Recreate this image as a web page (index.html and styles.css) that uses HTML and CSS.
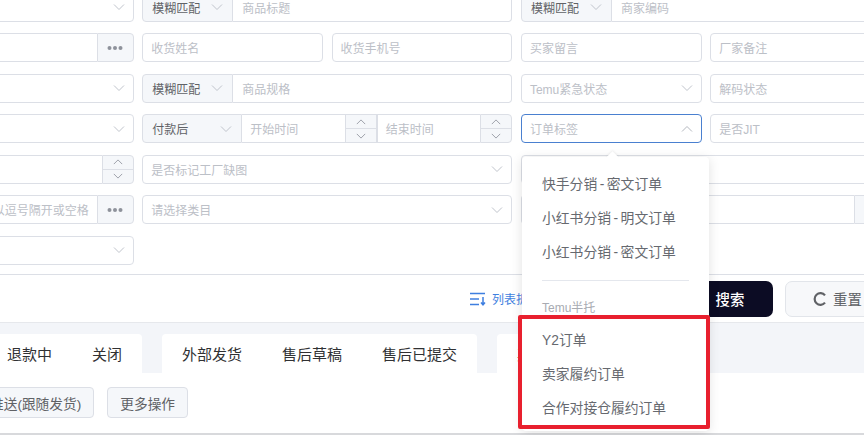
FILE: index.html
```html
<!DOCTYPE html>
<html>
<head>
    <title>订单列表</title>
    <link rel="stylesheet" href="styles.css">
</head>
<body>
    <svg class="icon-defs" width="0" height="0">
        <symbol id="down" viewBox="0 0 12 12"><path d="M1 3.5 L6 8.5 L11 3.5" fill="none" stroke="currentColor" stroke-width="1"/></symbol>
        <symbol id="up" viewBox="0 0 12 12"><path d="M1 8.5 L6 3.5 L11 8.5" fill="none" stroke="currentColor" stroke-width="1"/></symbol>
        <symbol id="dots" viewBox="0 0 16 6"><circle cx="2.5" cy="3" r="2"/><circle cx="8" cy="3" r="2"/><circle cx="13.5" cy="3" r="2"/></symbol>
    </svg>

    <div class="filters">
        <div class="filter-grid">
            <div class="field"><span class="grow"></span><svg class="arrow"><use href="#down"/></svg></div>
            <div class="group wide">
                <div class="prepend"><span>模糊匹配</span><svg class="arrow"><use href="#down"/></svg></div>
                <div class="field"><span class="ph">商品标题</span></div>
            </div>
            <div class="group wide">
                <div class="prepend"><span>模糊匹配</span><svg class="arrow"><use href="#down"/></svg></div>
                <div class="field"><span class="ph">商家编码</span></div>
            </div>

            <div class="group">
                <div class="field"></div>
                <div class="append"><svg class="dots"><use href="#dots"/></svg></div>
            </div>
            <div class="field"><span class="ph">收货姓名</span></div>
            <div class="field"><span class="ph">收货手机号</span></div>
            <div class="field"><span class="ph">买家留言</span></div>
            <div class="field"><span class="ph">厂家备注</span></div>

            <div class="field"><span class="grow"></span><svg class="arrow"><use href="#down"/></svg></div>
            <div class="group wide">
                <div class="prepend"><span>模糊匹配</span><svg class="arrow"><use href="#down"/></svg></div>
                <div class="field"><span class="ph">商品规格</span></div>
            </div>
            <div class="field"><span class="ph grow">Temu紧急状态</span><svg class="arrow"><use href="#down"/></svg></div>
            <div class="field"><span class="ph">解码状态</span></div>

            <div class="field"><span class="grow"></span><svg class="arrow"><use href="#down"/></svg></div>
            <div class="group wide">
                <div class="prepend pay"><span>付款后</span><svg class="arrow"><use href="#down"/></svg></div>
                <div class="field time"><span class="ph grow">开始时间</span></div>
                <div class="spinner">
                    <div><svg class="arrow"><use href="#up"/></svg></div>
                    <div><svg class="arrow"><use href="#down"/></svg></div>
                </div>
                <div class="field time"><span class="ph grow">结束时间</span></div>
                <div class="spinner">
                    <div><svg class="arrow"><use href="#up"/></svg></div>
                    <div><svg class="arrow"><use href="#down"/></svg></div>
                </div>
            </div>
            <div class="field focused"><span class="ph grow">订单标签</span><svg class="arrow big"><use href="#up"/></svg></div>
            <div class="field"><span class="ph">是否JIT</span></div>

            <div class="group">
                <div class="field"></div>
                <div class="spinner">
                    <div><svg class="arrow"><use href="#up"/></svg></div>
                    <div><svg class="arrow"><use href="#down"/></svg></div>
                </div>
            </div>
            <div class="field wide"><span class="ph grow">是否标记工厂缺图</span><svg class="arrow"><use href="#down"/></svg></div>
            <div class="field wide"></div>

            <div class="group">
                <div class="field end"><span class="ph">多个以逗号隔开或空格</span></div>
                <div class="append"><svg class="dots"><use href="#dots"/></svg></div>
            </div>
            <div class="field wide"><span class="ph grow">请选择类目</span><svg class="arrow"><use href="#down"/></svg></div>
            <div class="group wide">
                <div class="field"></div>
                <div class="append"><svg class="dots"><use href="#dots"/></svg></div>
            </div>

            <div class="field"><span class="grow"></span><svg class="arrow"><use href="#down"/></svg></div>
        </div>

        <div class="actions">
            <a class="collapse-link">
                <svg class="collapse-icon" viewBox="0 0 16 14"><path d="M0 1.5H15M0 7H9M0 12.5H9M13 5V12.5M11 10.5L13 12.8L15 10.5" fill="none" stroke="currentColor" stroke-width="1.5"/></svg>
                <span>列表折叠</span>
            </a>
            <button class="btn-search">搜索</button>
            <button class="btn-reset">
                <svg class="reset-icon" viewBox="0 0 14 14"><path d="M12 3.4A5.8 5.8 0 1 0 12 10.6" fill="none" stroke="currentColor" stroke-width="2.2"/></svg>
                <span>重置</span>
            </button>
        </div>
    </div>

    <div class="tabs-band">
        <div class="tab-card first">
            <div class="tab">退款中</div>
            <div class="tab">关闭</div>
        </div>
        <div class="tab-card">
            <div class="tab">外部发货</div>
            <div class="tab">售后草稿</div>
            <div class="tab">售后已提交</div>
        </div>
        <div class="tab-card">
            <div class="tab">其他</div>
        </div>
    </div>

    <div class="toolbar">
        <button class="btn-plain first">推送(跟随发货)</button>
        <button class="btn-plain">更多操作</button>
    </div>

    <div class="dropdown">
        <div class="dropdown-arrow"></div>
        <div class="dropdown-item">快手分销<span class="dash">-</span>密文订单</div>
        <div class="dropdown-item">小红书分销<span class="dash">-</span>明文订单</div>
        <div class="dropdown-item">小红书分销<span class="dash">-</span>密文订单</div>
        <div class="dropdown-divider"></div>
        <div class="dropdown-title">Temu半托</div>
        <div class="dropdown-item">Y2订单</div>
        <div class="dropdown-item">卖家履约订单</div>
        <div class="dropdown-item">合作对接仓履约订单</div>
    </div>

    <div class="highlight"></div>
</body>
</html>
```

FILE: styles.css
```css
* {
    margin: 0;
    padding: 0;
    box-sizing: border-box;
}

body {
    position: relative;
    width: 864px;
    height: 435px;
    overflow: hidden;
    background: #fff;
    color: #606266;
    font-family: 'Liberation Sans', 'Noto Sans CJK SC', sans-serif;
    font-size: 12px;
}

.icon-defs {
    position: absolute;
}

.filters {
    width: 938px;
    margin-left: -47px;
    margin-top: -7.3px;
}

.filter-grid {
    display: grid;
    grid-template-columns: repeat(5, 180.8px);
    grid-auto-rows: 29.3px;
    column-gap: 8.5px;
    row-gap: 11.2px;
    padding-bottom: 9px;
    border-bottom: 1px solid #dcdfe6;
}

.wide {
    grid-column: span 2;
}

.field {
    flex: 1;
    min-width: 0;
    display: flex;
    align-items: center;
    padding: 0 8px;
    background: #fff;
    border: 1px solid #dcdfe6;
    border-radius: 4px;
}

.field.focused {
    border-color: #4a80d0;
}

.field.end {
    justify-content: flex-end;
}

.grow {
    flex: 1;
}

.ph {
    color: #bcc0c7;
    font-size: 12px;
    white-space: nowrap;
}

.arrow {
    width: 12px;
    height: 12px;
    flex-shrink: 0;
    color: #c0c4cc;
}

.arrow.big {
    color: #b4b8bf;
}

.group {
    display: flex;
}

.group > * {
    border-radius: 0;
}

.group > *:first-child {
    border-radius: 4px 0 0 4px;
}

.group > *:last-child {
    border-radius: 0 4px 4px 0;
}

.prepend {
    width: 91px;
    flex-shrink: 0;
    display: flex;
    align-items: center;
    justify-content: space-between;
    padding: 0 9px;
    background: #f5f7fa;
    border: 1px solid #dcdfe6;
    color: #606266;
}

.prepend.pay {
    width: 100px;
}

.group > .prepend + .field {
    border-left: none;
    padding-left: 9px;
}

.group > .field:not(:last-child) {
    border-right: none;
}

.group > .prepend + .field.time {
    padding-left: 8px;
}

.append {
    width: 37px;
    flex-shrink: 0;
    display: flex;
    align-items: center;
    justify-content: center;
    background: #f5f7fa;
    border: 1px solid #dcdfe6;
}

.dots {
    width: 16px;
    height: 6px;
    fill: #8e929b;
}

.spinner {
    width: 32px;
    flex-shrink: 0;
    display: flex;
    flex-direction: column;
    background: #f5f7fa;
    border: 1px solid #dcdfe6;
}

.spinner > div {
    flex: 1;
    display: flex;
    align-items: center;
    justify-content: center;
}

.spinner > div + div {
    border-top: 1px solid #dcdfe6;
}

.spinner .arrow {
    width: 10px;
    height: 10px;
    color: #8e929b;
}

.actions {
    height: 47px;
    display: flex;
    justify-content: flex-end;
    align-items: flex-start;
    padding-top: 6px;
}

.collapse-link {
    display: flex;
    align-items: center;
    gap: 6px;
    height: 36px;
    margin-right: 147px;
    color: #3f7fe0;
    white-space: nowrap;
}

.collapse-icon {
    width: 16px;
    height: 14px;
}

.btn-search {
    width: 86px;
    height: 36px;
    border: none;
    border-radius: 7px;
    background: #0c0c24;
    color: #fff;
    font-family: inherit;
    font-size: 14.4px;
    font-weight: 500;
}

.btn-reset {
    display: flex;
    align-items: center;
    gap: 6px;
    width: 106px;
    height: 36px;
    margin-left: 12px;
    padding-left: 27px;
    border: 1px solid #e2e5ea;
    border-radius: 7px;
    background: #f7f8fa;
    color: #606266;
    font-family: inherit;
    font-size: 14.4px;
}

.reset-icon {
    width: 14px;
    height: 14px;
    flex-shrink: 0;
}

.tabs-band {
    display: flex;
    gap: 20px;
    height: 51px;
    padding-top: 11px;
    background: #f3f5f9;
    border-top: 1px solid #e6e8ec;
}

.tab-card {
    display: flex;
    height: 40px;
    background: #fff;
    border-radius: 4px 4px 0 0;
}

.tab-card.first {
    margin-left: -13px;
}

.tab {
    display: flex;
    align-items: center;
    padding: 0 20px;
    color: #303133;
    font-size: 15px;
    white-space: nowrap;
}

.toolbar {
    display: flex;
    gap: 13px;
    height: 62px;
    padding-top: 14px;
    border-bottom: 2px solid #d8d9dc;
}

.btn-plain {
    height: 31.5px;
    padding: 0 12px;
    border: 1px solid #dcdfe6;
    border-radius: 4px;
    background: #f5f7fa;
    color: #606266;
    font-family: inherit;
    font-size: 13.7px;
    white-space: nowrap;
}

.btn-plain.first {
    margin-left: -23px;
}

.dropdown {
    position: absolute;
    left: 522px;
    top: 156.5px;
    width: 186.5px;
    height: 274px;
    padding-top: 11px;
    background: #fff;
    border-radius: 4px;
    box-shadow: 0 2px 12px rgba(0, 0, 0, 0.12);
}

.dropdown-arrow {
    position: absolute;
    left: 86px;
    top: -4px;
    width: 9px;
    height: 9px;
    background: #fff;
    transform: rotate(45deg);
    box-shadow: -1px -1px 2px rgba(0, 0, 0, 0.05);
}

.dropdown-item {
    height: 34px;
    line-height: 34px;
    padding-left: 20px;
    color: #66696f;
    font-size: 13.8px;
    white-space: nowrap;
}

.dash {
    margin: 0 2.5px;
}

.dropdown-divider {
    height: 1px;
    margin: 10px 20px 0;
    background: #e4e7ed;
}

.dropdown-title {
    height: 43px;
    padding: 17px 0 0 20px;
    line-height: 20px;
    color: #a8abb2;
    font-size: 12px;
}

.highlight {
    position: absolute;
    left: 518px;
    top: 314.5px;
    width: 191.5px;
    height: 114px;
    border: 4px solid #e8202e;
    border-radius: 2px;
}
```
